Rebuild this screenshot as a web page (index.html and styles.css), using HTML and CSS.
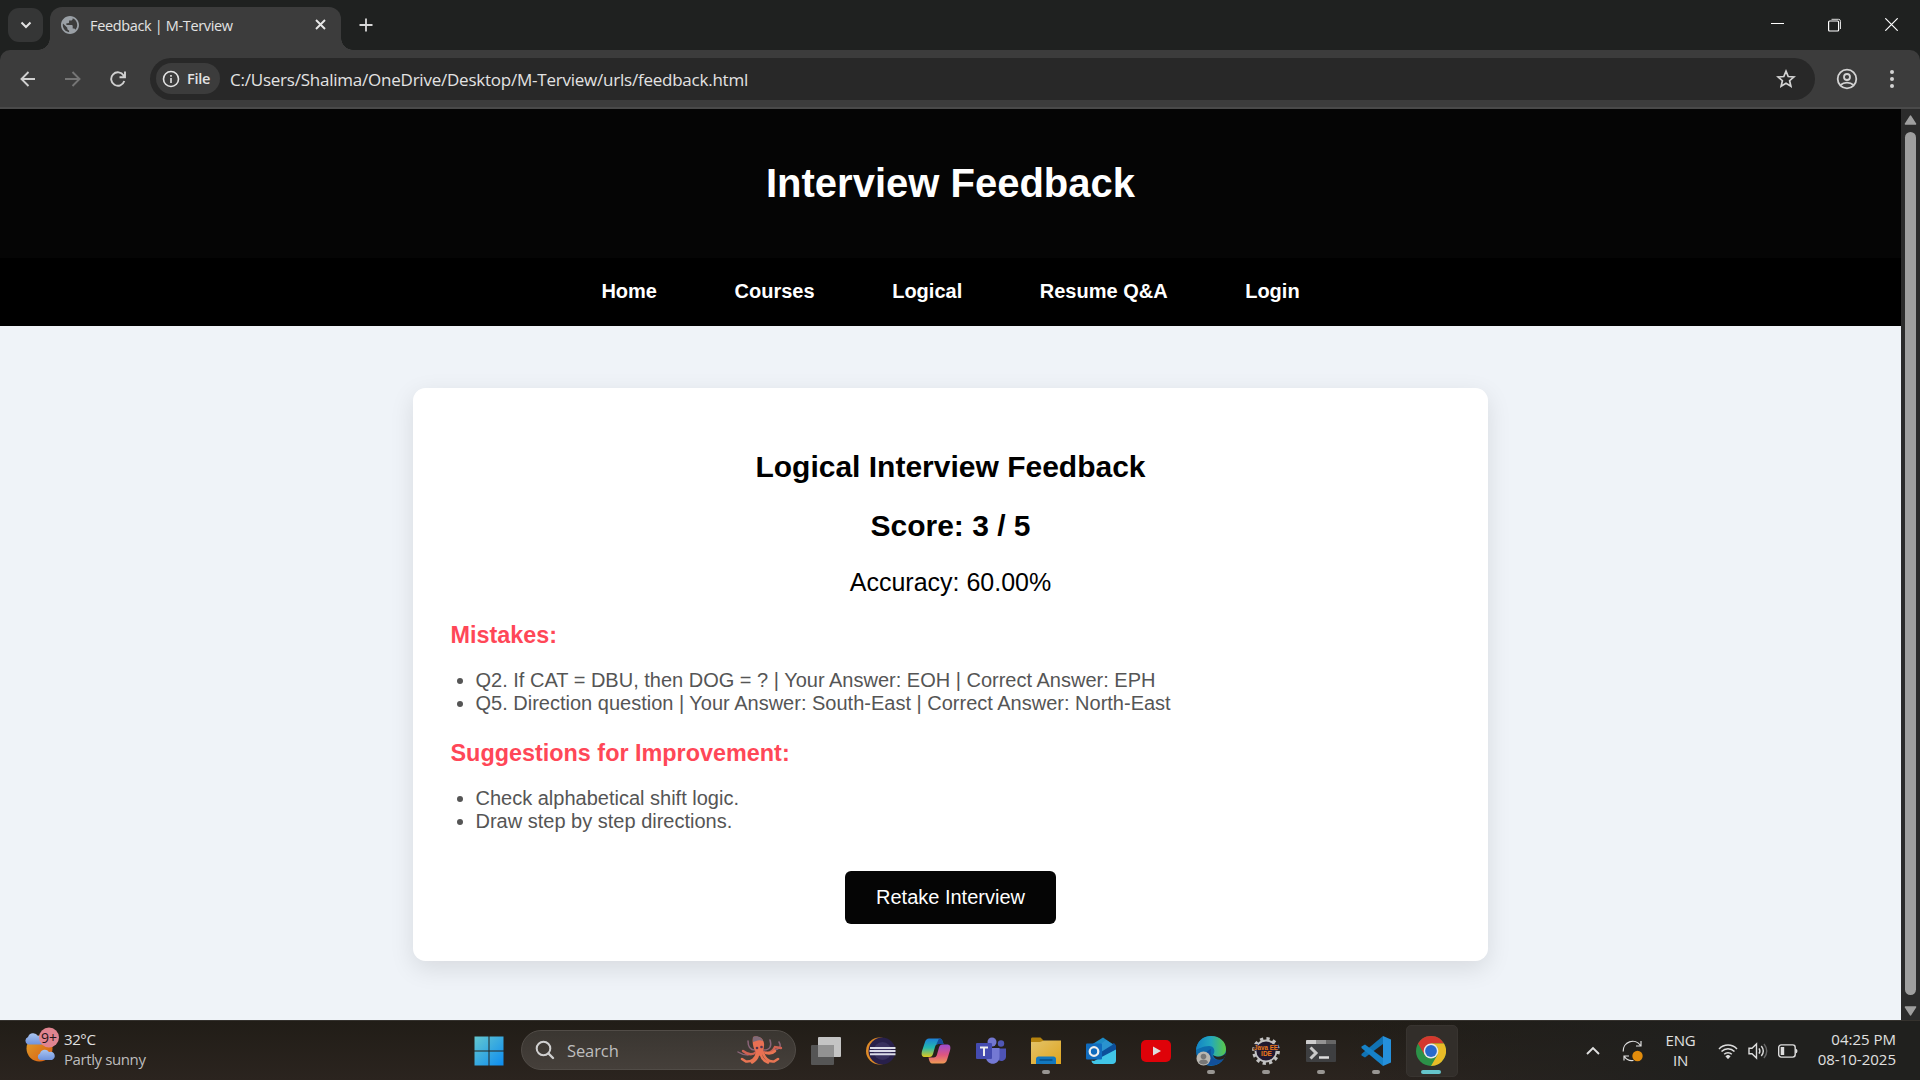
FILE: index.html
```html
<!DOCTYPE html>
<html lang="en">
<head>
<meta charset="utf-8">
<title>Feedback | M-Terview</title>
<link rel="stylesheet" href="styles.css">
</head>
<body>
<div class="screen">
  <div class="tabstrip">
    <div class="tab-search"><svg width="12" height="8" viewBox="0 0 12 8"><path d="M1.500 1.500 6 6l4.500-4.500" fill="none" stroke="#e3e3e3" stroke-width="2"/></svg></div>
    <div class="tab">
      <svg class="globe" width="18" height="18" viewBox="2 2 20 20"><path fill="#9aa0a6" d="M12 2C6.480 2 2 6.480 2 12s4.480 10 10 10 10-4.480 10-10S17.520 2 12 2zm-1 17.930c-3.950-.49-7-3.850-7-7.930 0-.62.080-1.210.210-1.790L9 15v1c0 1.100.9 2 2 2v1.930zm6.900-2.540c-.26-.81-1-1.390-1.900-1.390h-1v-3c0-.55-.45-1-1-1H8v-2h2c.55 0 1-.45 1-1V7h2c1.100 0 2-.9 2-2v-.41c2.930 1.190 5 4.060 5 7.410 0 2.080-.8 3.970-2.100 5.390z"/></svg>
      <span class="tab-title">Feedback | M-Terview</span>
      <svg width="11" height="11" viewBox="0 0 11 11"><path d="M1 1l9 9M10 1l-9 9" stroke="#e8e8e8" stroke-width="1.900"/></svg>
    </div>
    <svg class="newtab" width="14" height="14" viewBox="0 0 14 14"><path d="M7 .5v13M.5 7h13" stroke="#d8d8d8" stroke-width="1.800"/></svg>
    <div class="window-buttons">
      <svg width="13" height="13" viewBox="0 0 13 13"><path d="M0 5.500h13" stroke="#fff"/></svg>
      <svg width="14" height="14" viewBox="0 0 14 14"><path d="M3.500 1.300H10.500a2 2 0 0 1 2 2V11" fill="none" stroke="#ddd"/><rect x=".6" y="3" width="10" height="10" rx="1" fill="none" stroke="#fff" stroke-width="1.200"/></svg>
      <svg width="13" height="13" viewBox="0 0 13 13"><path d="M.3.300l12.400 12.400M12.700.300.300 12.700" stroke="#fff" stroke-width="1.200"/></svg>
    </div>
  </div>
  <div class="toolbar">
    <div class="nav-icons">
      <svg width="16" height="16" viewBox="0 0 16 16" fill="none" stroke="#d0d0d0" stroke-width="1.900"><path d="M15 8H2M8.500 1 1.500 8l7 7"/></svg>
      <svg width="16" height="16" viewBox="0 0 16 16" fill="none" stroke="#757575" stroke-width="1.900"><path d="M0 8H14M7.500 1l7 7-7 7"/></svg>
      <svg width="16" height="16" viewBox="0 0 16 16" fill="none" stroke="#d0d0d0" stroke-width="1.900"><path d="M14.300 10A6.700 6.700 0 1 1 13.600 4.500L14.500 6M9.500 6.200H15V.5"/></svg>
    </div>
    <div class="omnibox">
      <div class="chip"><svg width="18" height="18" viewBox="0 0 18 18"><circle cx="9" cy="9" r="7.500" fill="none" stroke="#e3e3e3" stroke-width="1.600"/><path d="M9 8v5M9 5v1.700" stroke="#e3e3e3" stroke-width="1.600"/></svg><span>File</span></div>
      <span class="url">C:/Users/Shalima/OneDrive/Desktop/M-Terview/urls/feedback.html</span>
      <svg class="star" width="20" height="20" viewBox="0 0 20 20"><path d="M10 2.200l2.200 5.300 5.700.5-4.300 3.700 1.300 5.600-4.900-3-4.900 3 1.300-5.600L2.100 8l5.700-.5z" fill="none" stroke="#d3d3d3" stroke-width="1.700"/></svg>
    </div>
    <svg class="profile" width="22" height="22" viewBox="0 0 22 22" fill="none" stroke="#d3d3d3" stroke-width="1.800"><circle cx="11" cy="11" r="9.300"/><circle cx="11" cy="9" r="3"/><path d="M4.500 17c3.500-3.200 9.500-3.200 13 0"/></svg>
    <svg class="dots" width="4" height="18" viewBox="0 0 4 18" fill="#d3d3d3"><circle cx="2" cy="2" r="2"/><circle cx="2" cy="9" r="2"/><circle cx="2" cy="16" r="2"/></svg>
  </div>

  <div class="viewport">
    <div class="page">
      <header class="page-header"><h1>Interview Feedback</h1></header>
      <nav class="page-nav"><a>Home</a><a>Courses</a><a>Logical</a><a>Resume Q&amp;A</a><a>Login</a></nav>
      <main class="card">
        <h2>Logical Interview Feedback</h2>
        <h2>Score: 3 / 5</h2>
        <p class="accuracy">Accuracy: 60.00%</p>
        <h3>Mistakes:</h3>
        <ul>
          <li>Q2. If CAT = DBU, then DOG = ? | Your Answer: EOH | Correct Answer: EPH</li>
          <li>Q5. Direction question | Your Answer: South-East | Correct Answer: North-East</li>
        </ul>
        <h3>Suggestions for Improvement:</h3>
        <ul>
          <li>Check alphabetical shift logic.</li>
          <li>Draw step by step directions.</li>
        </ul>
        <button class="retake">Retake Interview</button>
      </main>
    </div>
    <div class="scrollbar">
      <svg width="13" height="10" viewBox="0 0 13 10"><path d="M6.500 1.200 11.500 9H1.500z" fill="#9f9f9f" stroke="#9f9f9f" stroke-width="1.600" stroke-linejoin="round"/></svg>
      <div class="thumb"></div>
      <svg width="13" height="10" viewBox="0 0 13 10"><path d="M6.500 8.800 11.500 1H1.500z" fill="#9f9f9f" stroke="#9f9f9f" stroke-width="1.600" stroke-linejoin="round"/></svg>
    </div>
  </div>

  <div class="taskbar">
    <div class="weather">
      <svg width="36" height="36" viewBox="0 0 36 36">
        <defs><linearGradient id="sun" x1="0" y1="0" x2="1" y2="1"><stop offset="0" stop-color="#e0a32c"/><stop offset="1" stop-color="#d9590f"/></linearGradient><linearGradient id="cloud" x1="0" y1="0" x2="0" y2="1"><stop offset="0" stop-color="#a9c4ef"/><stop offset="1" stop-color="#6f93dd"/></linearGradient></defs>
        <circle cx="15.500" cy="21.500" r="13" fill="url(#sun)"/>
        <path d="M4 17.500a4 4 0 0 1 0-7.500 5.500 5.500 0 0 1 10-1 4.500 4.500 0 0 1 4 8.500z" fill="url(#cloud)"/>
        <path d="M16 33a3.500 3.500 0 0 1 0-6.500 5 5 0 0 1 9-1.500 4 4 0 0 1 3 8z" fill="url(#cloud)"/>
        <circle cx="25" cy="10.500" r="10" fill="#e08490"/>
        <text x="25" y="15.500" text-anchor="middle" class="badge-text">9+</text>
      </svg>
      <div class="weather-text"><div>32°C</div><div class="dim">Partly sunny</div></div>
    </div>

    <div class="start"><svg width="30" height="30" viewBox="0 0 30 30"><defs><linearGradient id="win" x1="0" y1="0" x2="1" y2="1"><stop offset="0" stop-color="#63c7d0"/><stop offset="1" stop-color="#0c8cf0"/></linearGradient></defs><path d="M.5.500h14v14H.5zM15.500.5H29.500v14h-14zM.5 15.500h14v14H.5zM15.500 15.500h14v14h-14z" fill="url(#win)"/></svg></div>

    <div class="search">
      <svg width="20" height="20" viewBox="0 0 20 20"><circle cx="8.500" cy="8.500" r="6.800" fill="none" stroke="#d0d0d0" stroke-width="2"/><path d="M13.500 13.500l4.500 4.500" stroke="#d0d0d0" stroke-width="2.400" stroke-linecap="round"/></svg>
      <span>Search</span>
      <svg class="octopus" width="48" height="30" viewBox="0 0 48 30" fill="none" stroke-linecap="round">
        <g stroke="#8a6478" stroke-width="1.500"><path d="M19 15c-5 0-7-3-7-9"/><path d="M28 15c6 0 8-4 6-10"/><path d="M38 15c5-1 8-3 5-8"/><path d="M12 20c-4 0-7-1-10-3"/></g>
        <g stroke="#cf6252" stroke-width="2.400"><path d="M20 17c-4 4-9 2-13-1"/><path d="M28 17c5 2 9-1 11-5l6 1"/></g>
        <g stroke="#e87553" stroke-width="2.600"><path d="M21 18c-1 6-6 9-11 8.500L6 24"/><path d="M22 20c-1 4-3 6-6 7.500"/><path d="M27 18c2 6 6 9 11 8.500l4-2.500"/><path d="M25 20c1 4 3 6 7 7.500"/><path d="M30 18c4 1 7 0 9-2"/></g>
        <path d="M17 2c7-2 12 3 11 9l-1 8c-2 3-6 2-7-2-3-4-4-10-3-15z" fill="#e87053"/><path d="M17 2c5-2 9 1 10 4-4-2-7 0-10 1z" fill="#806a78"/><circle cx="21" cy="13" r="1.300" fill="#55334f"/><circle cx="25.500" cy="12" r="1.300" fill="#55334f"/>
      </svg>
    </div>

    <div class="apps">
      <div class="app"><svg width="30" height="28" viewBox="0 0 30 28"><rect x="7" y="0" width="23" height="20" rx="1" fill="#c4c4c4"/><rect x="0" y="8" width="23" height="20" rx="1" fill="#555"/><rect x="7" y="8" width="16" height="12" fill="#929292"/></svg></div>
      <div class="app"><svg width="30" height="28" viewBox="0 0 30 28"><circle cx="13.500" cy="14" r="13.500" fill="#df8b27"/><circle cx="16" cy="14" r="13.500" fill="#28204b"/><circle cx="16.500" cy="14" r="9" fill="#39315f"/><path d="M4 11h25.500M3.500 14h26M4 17.200h25.500" stroke="#dcdce8" stroke-width="2"/></svg></div>
      <div class="app"><svg width="30" height="28" viewBox="0 0 30 28"><defs><linearGradient id="cpa" x1="0" y1="0" x2="0" y2="1"><stop offset="0" stop-color="#1c80d8"/><stop offset=".5" stop-color="#24b8ad"/><stop offset="1" stop-color="#e1c91e"/></linearGradient><linearGradient id="cpb" x1="0" y1="0" x2="0" y2="1"><stop offset="0" stop-color="#9b4bd0"/><stop offset=".55" stop-color="#df557e"/><stop offset="1" stop-color="#ef9b55"/></linearGradient></defs><path d="M8 1.500h10c3 0 3.500 2 4.500 5.500h-5c-2 0-3 1-3.500 3l-2 7c-.7 2-1.500 3-3.500 3H4c-3 0-4-2-3-6L4 5c.7-2.200 2-3.500 4-3.500z" fill="url(#cpa)"/><path d="M22 26.500H12c-3 0-3.500-2-4.500-6h5c2 0 3-1 3.500-3l2-7c.7-2 1.500-3 3.500-3H26c3 0 4 2 3 6L26 23c-.7 2.200-2 3.500-4 3.500z" fill="url(#cpb)"/><path d="M18 1.500c3 0 3.500 2 4.500 5.500h-5c-1 0-2 .5-2.500 1z" fill="#164b99"/></svg></div>
      <div class="app"><svg width="30" height="28" viewBox="0 0 30 28"><circle cx="16" cy="5" r="4.500" fill="#7377d0"/><circle cx="25" cy="6.500" r="3.200" fill="#5057b5"/><path d="M22 11.500h8v8c0 5-7 6-9 2z" fill="#4e54b5"/><path d="M10 11h13.500v9c0 9-13.500 9-13.500 0z" fill="#7479d4"/><rect x="0" y="6" width="16" height="16" rx="1" fill="#444bb0"/><path d="M4 10.500h8M8 10.500v8.500" stroke="#eee" stroke-width="2"/></svg></div>
      <div class="app run"><svg width="30" height="28" viewBox="0 0 30 28"><defs><linearGradient id="fold" x1="0" y1="0" x2="1" y2="1"><stop offset="0" stop-color="#e2c36a"/><stop offset="1" stop-color="#e0a51e"/></linearGradient></defs><path d="M0 2c0-1 .5-1.500 1.500-1.500h8L13 4v5H0z" fill="#b5830e"/><path d="M0 5h9l4-1.500h17V27H0z" fill="url(#fold)"/><path d="M5 27v-5c0-1.500 1-2.500 2.500-2.500h15c1.500 0 2.500 1 2.500 2.500v5z" fill="#1278bf"/><path d="M9 23h12" stroke="#064e87" stroke-width="1.300" stroke-linecap="round"/></svg></div>
      <div class="app"><svg width="30" height="28" viewBox="0 0 30 28"><path d="M5 8 17 .5 29.500 9v12L15 20z" fill="#1d8bc5"/><path d="M15 12 28 6l2 2.500v4L14 23l-2-6z" fill="#0c4f9a"/><path d="M12 9l8-6 7 4.500L15 15z" fill="#2a93cf"/><path d="M8 24 30 12.500v11c0 2-1.500 3.500-3.500 3.500H9c-2 0-3.500-1.500-3.500-3.500z" fill="#41c5e7"/><rect x="0" y="6.500" width="16" height="16" rx="1" fill="#106bbd"/><circle cx="8" cy="14.500" r="4.300" fill="none" stroke="#eee" stroke-width="2.300"/></svg></div>
      <div class="app"><svg width="30" height="22" viewBox="0 0 30 22"><rect width="30" height="22" rx="5" fill="#df0209"/><path d="M12 6.500v9l8-4.500z" fill="#ddd"/></svg></div>
      <div class="app run"><svg width="30" height="30" viewBox="0 0 30 30"><defs><linearGradient id="edge" x1="0" y1="0" x2="1" y2="0"><stop offset="0" stop-color="#1383c5"/><stop offset=".5" stop-color="#24a8bd"/><stop offset="1" stop-color="#5bc846"/></linearGradient></defs><circle cx="15" cy="15" r="15" fill="#0e6cae"/><path d="M0 14C1 5 7 0 15 0c9 0 15 6 15 13 0 8-9 9-13 6 3-4 1-9-4-9C7 10 2 13 0 14z" fill="url(#edge)"/><path d="M15 13c-2 8 5 14 13 9-4 7-12 9-18 6-3-5-1-13 5-15z" fill="#12509b"/><path d="M17 19c4 3 10 2 13-2-.2 2-.8 4-2 5.500-5 2.500-10 1-11-3.500z" fill="#26231e"/><circle cx="7.500" cy="22.500" r="7" fill="#b9b7b1"/><circle cx="7.500" cy="20.500" r="2.800" fill="#777"/><path d="M3 26.500c0-4 9-4 9 0-2 2.500-7 2.500-9 0z" fill="#777"/></svg></div>
      <div class="app run"><svg width="30" height="30" viewBox="0 0 30 30"><circle cx="15" cy="15" r="12.400" fill="none" stroke="#c3c3c3" stroke-width="3" stroke-dasharray="3.250 3.250"/><circle cx="15" cy="15" r="10.500" fill="#21192f" stroke="#c3c3c3" stroke-width="1.800"/><text x="15" y="13.500" text-anchor="middle" class="jee" textLength="24" lengthAdjust="spacingAndGlyphs">Java EE</text><text x="15.500" y="19.700" text-anchor="middle" class="jee">IDE</text></svg></div>
      <div class="app run"><svg width="30" height="22" viewBox="0 0 30 22"><rect width="30" height="22" rx="1" fill="#3e3f41"/><path d="M0 4V1q0-1 1-1h9v4z" fill="#ccc"/><path d="M10 0h10v4H10z" fill="#939393"/><path d="M20 0h9q1 0 1 1v3H20z" fill="#666"/><path d="M4.500 7.500 10 13l-5.500 5.500" fill="none" stroke="#c9c9c9" stroke-width="3"/><path d="M13 17.500h10" stroke="#ddd" stroke-width="2.500"/></svg></div>
      <div class="app run"><svg width="30" height="30" viewBox="0 0 30 30"><path d="M22 0 30 3.500v23L22 30z" fill="#2590db"/><path d="M22 0v8L4 21.500 0.500 19.500V18z" fill="#1173b4"/><path d="M22 30v-8L4 8.500.5 10.500V12z" fill="#1682c8"/></svg></div>
      <div class="app run active"><svg width="30" height="30" viewBox="0 0 30 30"><circle cx="15" cy="15" r="15" fill="#2c9148"/><path d="M2 7.500A15 15 0 0 1 28 7.500H15L8.500 18.700z" fill="#d4382e"/><path d="M28 7.500A15 15 0 0 1 15 30l6.500-11.200L21.500 11.200 15 7.500z" fill="#e8bb27"/><circle cx="15" cy="15" r="7.400" fill="#e8e8e8"/><circle cx="15" cy="15" r="5.900" fill="#2869cc"/></svg></div>
    </div>

    <div class="tray">
      <svg class="chev" width="14" height="9" viewBox="0 0 14 9"><path d="M1 8l6-6 6 6" fill="none" stroke="#e0e0e0" stroke-width="1.900"/></svg>
      <svg class="sync" width="22" height="22" viewBox="0 0 22 22"><path d="M1.200 11.500A9.500 9.500 0 0 1 18.500 5.500M19 1v5h-5M2 20.500v-4.500h5M2.500 16.500c2 3.500 5 4.500 9 4" fill="none" stroke="#ddd" stroke-width="1.200"/><circle cx="15.500" cy="16" r="5.200" fill="#e28c0c"/></svg>
      <div class="lang"><div>ENG</div><div>IN</div></div>
      <svg class="wifi" width="20" height="16" viewBox="0 0 20 16" fill="none" stroke="#ddd" stroke-width="1.500"><path d="M1 6c5-5.300 13-5.300 18 0M3.500 8.500c3.700-3.800 9.300-3.800 13 0M6.200 11.300c2.200-2.200 5.400-2.200 7.600 0"/><circle cx="10" cy="13.500" r="1.300" fill="#ddd" stroke="none"/><path d="M8.500 13.300q1.500-1 3 0L10 15z" fill="#ddd"/></svg>
      <svg class="vol" width="20" height="18" viewBox="0 0 20 18" fill="none" stroke="#ddd" stroke-width="1.400"><path d="M1 6.300h3L8.500 2v14L4 11.700H1z"/><path d="M11 6.300q1.800 2.700 0 5.400M13.300 4q4 5 0 10"/><path d="M16 2q5.500 7 0 14" stroke="#666"/></svg>
      <svg class="bat" width="20" height="14" viewBox="0 0 20 14"><rect x=".7" y=".9" width="16.500" height="12.200" rx="2.500" fill="none" stroke="#ddd" stroke-width="1.400"/><path d="M2.700 3h3.500v8H2.700z" fill="#ddd"/><path d="M17.500 4.500q2 .5 2 2.500t-2 2.500z" fill="#ddd"/></svg>
      <div class="clock"><div class="time">04:25 PM</div><div class="date">08-10-2025</div></div>
    </div>
  </div>
</div>
</body>
</html>
```
FILE: styles.css
```css
* { box-sizing: border-box; }
body { margin: 0; font-family: "Open Sans", "Noto Sans", sans-serif; }
svg { display: block; flex: none; }
.screen { width: 1920px; height: 1080px; display: flex; flex-direction: column; overflow: hidden; background: #1f2120; }

.tabstrip { height: 50px; flex: none; display: flex; background: #1f2120; }
.tab-search { width: 35px; height: 34px; margin: 8px 7px 0 8px; border-radius: 11px; background: #353636; display: flex; align-items: center; justify-content: center; }
.tab { position: relative; width: 291px; height: 43px; margin-top: 7px; padding: 0 15px 8px 11px; border-radius: 12px 12px 0 0; background: #3c3c3c; display: flex; align-items: center; }
.tab::before, .tab::after { content: ""; position: absolute; bottom: 0; width: 12px; height: 12px; }
.tab::before { left: -12px; background: radial-gradient(circle at 0 0, transparent 11.500px, #3c3c3c 12px); }
.tab::after { right: -12px; background: radial-gradient(circle at 100% 0, transparent 11.500px, #3c3c3c 12px); }
.tab-title { flex: 1; margin-left: 11px; padding-top: 1px; font-size: 14.500px; letter-spacing: -.35px; color: #e3e3e3; white-space: nowrap; }
.newtab { margin: 18px 0 0 18px; }
.window-buttons { margin: 18px 22px 0 auto; display: flex; gap: 43.500px; }

.toolbar { height: 59px; flex: none; display: flex; align-items: center; background: #3c3c3c; border-bottom: 2px solid #4a4a4a; border-radius: 10px 10px 0 0; }
.nav-icons { width: 150px; padding-left: 20px; display: flex; gap: 29px; }
.omnibox { width: 1665px; height: 42px; padding: 0 19px 0 6px; border-radius: 21px; background: #282828; display: flex; align-items: center; }
.chip { width: 64px; height: 31px; padding-left: 6px; border-radius: 16px; background: #3c3c3c; display: flex; align-items: center; gap: 7px; font-size: 14.500px; font-weight: 600; letter-spacing: -.3px; color: #e3e3e3; }
.url { flex: 1; margin-left: 10px; padding-top: 1px; font-size: 17px; letter-spacing: -.23px; color: #e3e3e3; white-space: nowrap; }
.profile { margin-left: 21px; }
.dots { margin-left: 32px; }

.viewport { flex: 1; display: flex; min-height: 0; }
.page { width: 1901px; background: #eff3f8; font-family: "Liberation Sans", Arial, sans-serif; color: #000; }
.page-header { height: 149px; padding-bottom: 2px; background: #050505; display: flex; align-items: center; justify-content: center; }
.page-header h1 { margin: 0; font-size: 40px; line-height: 46px; color: #fff; }
.page-nav { height: 68px; padding-bottom: 2px; background: #000; display: flex; align-items: center; justify-content: center; gap: 77.600px; font-size: 20px; font-weight: 700; color: #fff; }
.card { width: 1075px; height: 573px; margin: 62px auto 0; padding: 62px 37.500px 0; border-radius: 12.500px; background: #fff; box-shadow: 0 7.500px 25px rgba(0, 0, 0, .1); }
.card h2 { margin: 0 0 25px; font-size: 30px; line-height: 34px; text-align: center; }
.accuracy { margin: 0 0 25px; font-size: 25px; line-height: 29px; text-align: center; }
.card h3 { margin: 0 0 20px; font-size: 23.400px; line-height: 27px; color: #ff4757; }
.card ul { margin: 0 0 24.200px; padding-left: 25px; font-size: 20px; line-height: 23.400px; color: #555; }
.retake { display: block; width: 211px; height: 53px; margin: 37.500px auto 0; padding: 0; border: 0; border-radius: 6px; background: #050505; color: #fff; font: 20px "Liberation Sans", Arial, sans-serif; }

.scrollbar { width: 19px; padding: 6px 3px 0; background: #2b2b2b; display: flex; flex-direction: column; }
.thumb { width: 11px; height: 863px; margin: 7px 1px 11px; border-radius: 6px; background: #9f9f9f; }

.taskbar { height: 60px; flex: none; display: flex; border-top: 1px solid #35322e; background: linear-gradient(90deg, rgba(32,32,32,0) 70%, #20201e 90%), linear-gradient(#211d17, #2b241f); color: #e0e0e0; font-size: 15px; line-height: 20px; }
.weather { width: 473px; padding: 6px 0 0 24px; display: flex; }
.badge-text { font-size: 14px; fill: #26151a; }
.weather-text { margin-left: 4px; padding-top: 2px; letter-spacing: -.4px; }
.dim { color: #bdbdbd; }
.start { width: 48px; padding: 15px 0 0 1px; }
.search { width: 275px; height: 40px; margin-top: 9px; padding: 0 11px 0 13px; border: 1px solid #514c47; border-radius: 20px; background: linear-gradient(#3a3631, #453f3a); display: flex; align-items: center; }
.search span { flex: 1; margin-left: 12px; padding-top: 2px; font-size: 16.500px; letter-spacing: -.1px; color: #bebebe; }
.apps { display: flex; margin-left: 2.500px; }
.app { position: relative; width: 55px; height: 59px; display: flex; align-items: center; justify-content: center; }
.app svg { position: relative; }
.app.run::after { content: ""; position: absolute; left: 23.500px; bottom: 6px; width: 8px; height: 4px; border-radius: 2px; background: #989592; }
.app.active::before { content: ""; position: absolute; left: 2px; top: 4px; width: 50px; height: 50px; border: 1px solid #383430; border-radius: 5px; background: #322e2a; }
.app.active::after { left: 17.500px; width: 20px; background: #65c5cb; }
.jee { font-family: "Liberation Sans", sans-serif; font-size: 6.500px; font-weight: 700; fill: #ec7b1c; stroke: #21192f; stroke-width: 1.600px; paint-order: stroke; }
.tray { flex: 1; display: flex; align-items: center; }
.chev { margin-left: 127px; }
.sync { margin-left: 22px; }
.lang { width: 50px; margin: 0 1px 2px 12px; text-align: center; letter-spacing: -.2px; }
.wifi { margin-left: 11px; }
.vol { margin-left: 10px; }
.bat { margin-left: 10px; }
.clock { flex: 1; padding: 0 24px 3px 0; text-align: right; white-space: nowrap; }
```
